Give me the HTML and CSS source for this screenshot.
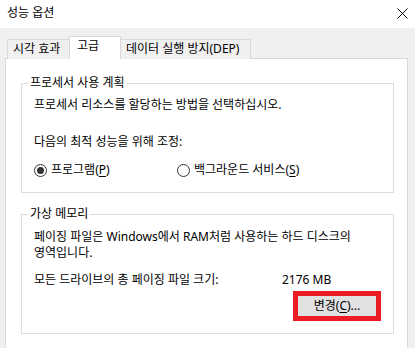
FILE: index.html
```html
<!DOCTYPE html>
<html lang="ko">
<head>
<meta charset="utf-8">
<title>성능 옵션</title>
<link rel="stylesheet" href="styles.css">
</head>
<body>
<div class="window">
  <div class="titlebar">
    <span class="title">성능 옵션</span>
    <svg class="close" width="11" height="11" viewBox="0 0 11 11"><path d="M0.5 0.5 L10.5 10.5 M10.5 0.5 L0.5 10.5" stroke="#000" stroke-width="1" fill="none"/></svg>
  </div>
  <div class="content">
    <div class="tabs">
      <div class="tab tab-visual">시각 효과</div>
      <div class="tab tab-adv active">고급</div>
      <div class="tab tab-dep">데이터 실행 방지(DEP)</div>
    </div>
    <div class="panel">
      <fieldset class="group group-cpu">
        <legend>프로세서 사용 계획</legend>
        <p class="line">프로세서 리소스를 할당하는 방법을 선택하십시오.</p>
        <p class="line adjust">다음의 최적 성능을 위해 조정:</p>
        <div class="radios">
          <label class="radio r-prog"><span class="dot checked"></span><span>프로그램(<u>P</u>)</span></label>
          <label class="radio"><span class="dot"></span><span>백그라운드 서비스(<u>S</u>)</span></label>
        </div>
      </fieldset>
      <fieldset class="group group-vm">
        <legend>가상 메모리</legend>
        <p class="line">페이징 파일은 Windows에서 RAM처럼 사용하는 하드 디스크의<br>영역입니다.</p>
        <div class="total">
          <span class="total-label">모든 드라이브의 총 페이징 파일 크기:</span>
          <span class="total-value">2176 MB</span>
        </div>
        <div class="btnrow">
          <div class="btn">변경(<u>C</u>)...</div>
        </div>
      </fieldset>
    </div>
  </div>
</div>
</body>
</html>
```

FILE: styles.css
```css
* { box-sizing: border-box; }
html, body {
  margin: 0;
  padding: 0;
  background: #f0f0f0;
}
body {
  font-family: "Noto Sans", "Noto Sans CJK KR", sans-serif;
  font-size: 12px;
  line-height: 16px;
  color: #000;
  width: 415px;
  height: 348px;
  overflow: hidden;
}
.titlebar {
  height: 28px;
  background: #fff;
  display: flex;
  align-items: center;
  justify-content: space-between;
  padding: 0 7px 2px 7px;
}
.close { display: block; margin-top: 1px; margin-right: 0; }
.content {
  padding: 8px 7px 0 5px;
}
.tabs {
  display: flex;
  align-items: flex-end;
  height: 23px;
  margin-left: 2px;
  margin-bottom: -1px;
}
.tab {
  height: 20px;
  border: 1px solid #d9d9d9;
  border-bottom: none;
  background: #f0f0f0;
  line-height: 18px;
  white-space: nowrap;
}
.tab-visual { width: 62px; padding-left: 5px; border-right: none; }
.tab-adv { width: 52px; padding-left: 7px; }
.tab-dep { width: 130px; padding-left: 5px; border-left: none; }
.tab.active {
  height: 23px;
  background: #fff;
  position: relative;
  z-index: 1;
  line-height: 17px;
}
.panel {
  background: #fff;
  border: 1px solid #d9d9d9;
  height: 300px;
  padding: 16px 13px 0 15px;
}
.group {
  margin: 0;
  border: 1px solid #dcdcdc;
  padding: 6px 12px 14px 12px;
  min-width: 0;
}
.group legend {
  padding: 0 2px;
  margin-left: -6px;
  line-height: 16px;
}
.line { margin: 0; }
.adjust { margin-top: 21px; }
.radios {
  display: flex;
  margin-top: 12px;
  height: 16px;
  align-items: center;
}
.radio {
  display: flex;
  align-items: center;
  gap: 4px;
}
.r-prog { width: 143px; }
.dot {
  width: 13px;
  height: 13px;
  border: 1px solid #333;
  border-radius: 50%;
  background: #fff;
  display: flex;
  align-items: center;
  justify-content: center;
}
.dot.checked::after {
  content: "";
  width: 7px;
  height: 7px;
  border-radius: 50%;
  background: #333;
}
.group-vm {
  margin-top: 13px;
  padding: 7px 12px 12px 12px;
}
.total {
  display: flex;
  margin-top: 11px;
}
.total-label { width: 248px; }
.btnrow {
  display: flex;
  margin-top: 3px;
}
.btn {
  margin-left: 259px;
  width: 90px;
  height: 30px;
  border: 5px solid #ec1c24;
  background: #e1e1e1;
  text-align: center;
  line-height: 20px;
}
u { text-decoration: underline; text-underline-offset: 2px; }
```
